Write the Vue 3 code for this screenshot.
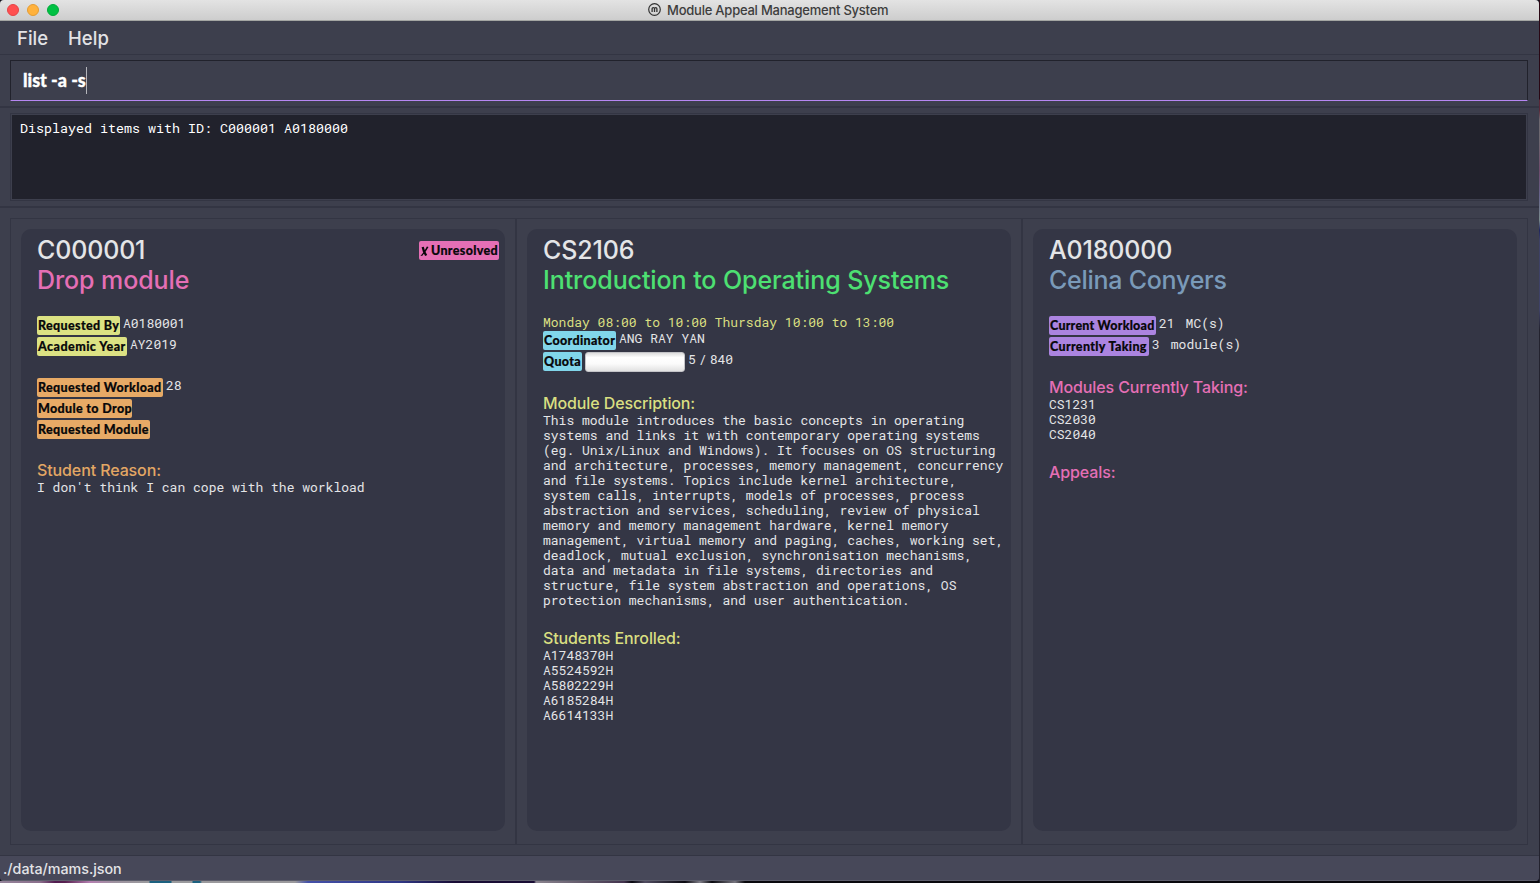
<script setup>
const description = [
  'This module introduces the basic concepts in operating',
  'systems and links it with contemporary operating systems',
  '(eg. Unix/Linux and Windows). It focuses on OS structuring',
  'and architecture, processes, memory management, concurrency',
  'and file systems. Topics include kernel architecture,',
  'system calls, interrupts, models of processes, process',
  'abstraction and services, scheduling, review of physical',
  'memory and memory management hardware, kernel memory',
  'management, virtual memory and paging, caches, working set,',
  'deadlock, mutual exclusion, synchronisation mechanisms,',
  'data and metadata in file systems, directories and',
  'structure, file system abstraction and operations, OS',
  'protection mechanisms, and user authentication.',
]
const enrolled = ['A1748370H', 'A5524592H', 'A5802229H', 'A6185284H', 'A6614133H']
const taking = ['CS1231', 'CS2030', 'CS2040']
</script>

<template>
  <div class="desktop">
    <div class="window">
      <header class="titlebar">
        <div class="lights"><i class="red"></i><i class="amber"></i><i class="green"></i></div>
        <svg class="logo" width="14" height="14" viewBox="0 0 14 14" fill="none" stroke="#333">
          <circle cx="6.5" cy="6.5" r="5.8" stroke-width="1.2" />
          <path d="M4.1 8.9V5.8Q4.1 4.6 5.3 4.6T6.5 5.8V8.9M6.5 5.8Q6.5 4.6 7.7 4.6T8.9 5.8V8.9" stroke-width="1.3" />
        </svg>
        <span class="title">Module Appeal Management System</span>
      </header>
      <nav class="menu"><span>File</span><span>Help</span></nav>
      <section class="command">
        <div class="field"><span class="typed">list -a -s</span><i class="caret"></i></div>
      </section>
      <section class="result">
        <div class="output"><p>Displayed items with ID: C000001 A0180000</p></div>
      </section>
      <main class="panels">
        <div class="frame">
          <div class="pane">
            <article class="card">
              <div class="top"><h1>C000001</h1><b class="tag pink w-un"><svg width="9" height="11" viewBox="0 0 9 11"><path d="M1.6 1.2L3.8 .8Q4.6 5.4 7.2 9L5.2 10Q2.4 6 1.6 1.2ZM6.9 .6L8.5 1.1Q6 6 2.2 9.8L.4 10Q4.4 6 6.9 .6Z" /></svg><span>Unresolved</span></b></div>
              <h2 class="c-pink">Drop module</h2>
              <div class="rows">
                <div class="row"><b class="tag yellow w-rb">Requested By</b><span>A0180001</span></div>
                <div class="row"><b class="tag yellow w-ay">Academic Year</b><span>AY2019</span></div>
              </div>
              <div class="rows second">
                <div class="row"><b class="tag orange w-rw">Requested Workload</b><span>28</span></div>
                <div class="row"><b class="tag orange w-md">Module to Drop</b></div>
                <div class="row"><b class="tag orange w-rm">Requested Module</b></div>
              </div>
              <h3 class="c-orange">Student Reason:</h3>
              <p class="line">I don't think I can cope with the workload</p>
            </article>
          </div>
          <div class="pane">
            <article class="card">
              <div class="top"><h1>CS2106</h1></div>
              <h2 class="c-green">Introduction to Operating Systems</h2>
              <p class="line schedule">Monday 08:00 to 10:00 Thursday 10:00 to 13:00</p>
              <div class="rows tight">
                <div class="row"><b class="tag cyan w-co">Coordinator</b><span>ANG RAY YAN</span></div>
                <div class="row"><b class="tag cyan w-qu">Quota</b><i class="progress"></i><span>5</span><span class="slash">/</span><span class="limit">840</span></div>
              </div>
              <h3 class="c-yellow about">Module Description:</h3>
              <p v-for="t in description" :key="t" class="line">{{ t }}</p>
              <h3 class="c-yellow">Students Enrolled:</h3>
              <p v-for="t in enrolled" :key="t" class="line">{{ t }}</p>
            </article>
          </div>
          <div class="pane">
            <article class="card">
              <div class="top"><h1>A0180000</h1></div>
              <h2 class="c-blue student">Celina Conyers</h2>
              <div class="rows">
                <div class="row"><b class="tag purple w-cw">Current Workload</b><span>21</span><span class="unit">MC(s)</span></div>
                <div class="row"><b class="tag purple w-ct">Currently Taking</b><span>3</span><span class="unit">module(s)</span></div>
              </div>
              <h3 class="c-pink">Modules Currently Taking:</h3>
              <p v-for="t in taking" :key="t" class="line">{{ t }}</p>
              <h3 class="c-pink">Appeals:</h3>
            </article>
          </div>
        </div>
      </main>
      <footer class="status">./data/mams.json</footer>
    </div>
  </div>
</template>

<style>
body { margin: 0; overflow: hidden; background: #10101a; }
</style>
<style scoped>
* { box-sizing: border-box; }
h1, h2, h3, p { margin: 0; font-weight: 450; white-space: pre; }
.desktop {
  width: 1540px; height: 883px; padding: 0 1px 2px 0;
  font-family: Inter, "Liberation Sans", sans-serif;
  background:
    linear-gradient(180deg, #2a0714 0 99px, #5b2637 100px 110px, #6d6870 120px 140px, #6e4b6b 170px, #65628a 195px, #7a8a8c 220px, #1f2560 230px, #3e4166 240px 310px, #23222e 330px 100%) right top / 1px 100% no-repeat,
    linear-gradient(90deg, #94849a 0, #8b6f8c 40px, #521c50 55px, #582150 65px, #b47fb0 90px, #9d929f 115px, #9a9a9d 149px, #1c6180 150px 171px, #9a9a9d 172px 192px, #1c6180 193px 200px, #9a999c 202px 295px, #4450a8 308px, #2f3785 400px, #190c34 455px 534px, #8a838e 536px, #5c5365 590px, #43334e 624px, #08080f 632px, #504b60 645px, #0a0910 685px, #807e88 700px, #09090e 712px, #77757f 735px, #09080d 745px 100%) left bottom / 100% 2px no-repeat;
}
.window { display: flex; flex-direction: column; height: 881px; background: #3d3f4d; border-radius: 4px; overflow: hidden; }
.titlebar { display: flex; height: 21px; background: linear-gradient(#e3e3e3, #cdcdcd); border-bottom: 1px solid #a4a6a3; color: #3d3d3d; }
.lights { display: flex; gap: 8px; padding: 4px 0 0 7px; width: 648px; }
.lights i { width: 12px; height: 12px; border-radius: 50%; }
.red { background: #ff4f50; border: 1px solid #e44447; }
.amber { background: #ffb23d; border: 1px solid #e49c33; }
.green { background: #00c143; border: 1px solid #00aa3a; }
.logo { margin: 3px 5px 0 0; }
.title { font-size: 13px; line-height: 21px; letter-spacing: -.23px; white-space: nowrap; font-weight: 450; }
.menu { display: flex; height: 34px; border-bottom: 1px solid #333543; color: #e3e3e6; font-size: 18.5px; font-weight: 450; line-height: 34px; padding-left: 17px; gap: 20px; }
.command { height: 53px; padding: 5px 11px 0 10px; border-bottom: 2px solid #333543; }
.field { display: flex; align-items: center; height: 41px; border: 1px solid #21222c; border-bottom-color: #b687f2; padding-left: 12px; color: #fff; }
.typed { font: 900 18px/26px Lato, sans-serif; padding-bottom: 2px; letter-spacing: -.04px; -webkit-text-stroke: .3px #fff; white-space: pre; }
.caret { width: 1px; height: 27px; background: #b4b5bb; }
.result { height: 100px; padding: 5px 11px 0 10px; border-bottom: 2px solid #333543; }
.output { height: 88px; border: 1px solid #333543; background: #21222c; box-shadow: inset 0 0 0 1px #3d3f4d; padding: 6px 9px; color: #fff; }
.output p { font: 450 13.33px/16px "Roboto Mono", "DejaVu Sans Mono", monospace; }
.panels { height: 647px; padding: 10px 11px 0 10px; }
.frame { display: flex; height: 627px; border: 1px solid #333543; }
.pane { width: 506px; padding: 10px; border-right: 2px solid #333543; }
.pane:last-child { width: 504px; border-right: 0; }
.card { width: 484px; height: 602px; border-radius: 10px; background: #343645; padding: 6px 6px 0 16px; color: #e4e5e7; }
.top { display: flex; justify-content: space-between; height: 30px; }
h1 { font-size: 25px; line-height: 31px; letter-spacing: -.15px; }
h2 { font-size: 25px; line-height: 31px; height: 30px; letter-spacing: -.08px; }
.student { letter-spacing: -.26px; }
h3 { font-size: 16px; line-height: 19px; margin-top: 22px; letter-spacing: -.11px; }
.line, .row span { font: 450 13px/15px "Roboto Mono", "DejaVu Sans Mono", monospace; white-space: pre; }
h3.about { margin-top: 23px; }
.line + h3 { margin-top: 21px; }
.rows { margin-top: 21px; display: flex; flex-direction: column; gap: 2px; }
.rows.second { margin-top: 22px; }
.rows.tight { margin-top: 1px; }
.row { display: flex; height: 19px; }
.row span { margin-left: 3px; }
.row .unit { margin-left: 11px; }
.row .slash, .row .limit { margin-left: 3px; }
.line.schedule { margin-top: 20px; color: #d9df81; }
.tag { display: flex; align-items: center; height: 19px; padding: 1px 0 0 1px; border-radius: 2px; color: #08080a; font: 900 12.5px/18px Lato, sans-serif; letter-spacing: .34px; -webkit-text-stroke: .2px #08080a; white-space: pre; }
.top .tag { margin-top: 6px; gap: 2px; }
.tag svg { fill: #08080a; }
.w-un { width: 80px; }
.w-rb { width: 83px; }
.w-ay { width: 90px; letter-spacing: .45px; }
.w-rw { width: 126px; }
.w-md { width: 95px; }
.w-rm { width: 113px; }
.w-co { width: 73px; }
.w-qu { width: 39px; }
.w-cw { width: 107px; letter-spacing: .22px; }
.w-ct { width: 100px; }
.yellow { background: #dce283; }
.orange { background: #e7aa66; }
.pink { background: #e56fb5; }
.cyan { background: #81d6ea; }
.purple { background: #ab84e0; }
.c-pink { color: #e56fb5; }
.c-orange { color: #e3a764; }
.c-green { color: #4de072; }
.c-yellow { color: #d9df81; }
.c-blue { color: #7a9ab9; }
.progress { width: 100px; height: 20px; margin-left: 3px; border-radius: 3px; background: linear-gradient(#ddd, #fff 25%, #fbfbfb 60%, #e2e2e2); border: 1px solid #c4c4c8; }
.status { height: 26px; border-top: 1px solid #333543; border-bottom: 1px solid #5d5e6c; background: #474859; color: #e4e4e7; font-size: 14.3px; font-weight: 450; line-height: 26px; padding-left: 3px; letter-spacing: -.02px; }
</style>
